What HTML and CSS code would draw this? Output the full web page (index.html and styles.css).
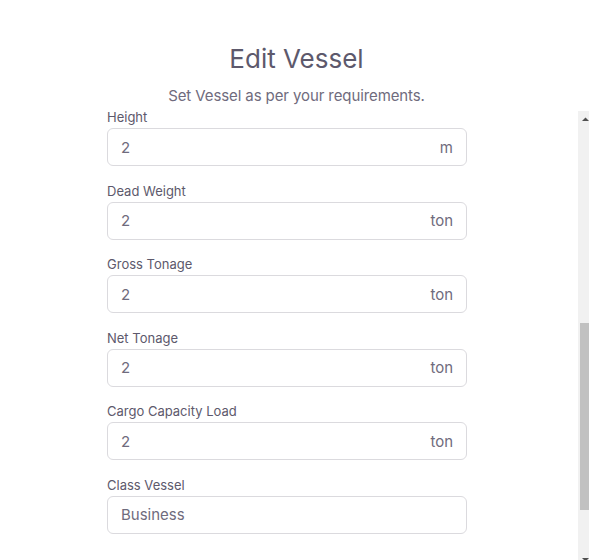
FILE: index.html
```html
<!DOCTYPE html>
<html lang="en">
<head>
<meta charset="utf-8">
<title>Edit Vessel</title>
<link rel="stylesheet" href="styles.css">
</head>
<body>
<div class="modal">
  <div class="modal-header">
    <h3 class="title">Edit Vessel</h3>
    <p class="subtitle">Set Vessel as per your requirements.</p>
  </div>
  <div class="modal-body">
    <form class="form">
      <div class="field"><label class="label">Height</label><div class="control"><span class="value">2</span><span class="unit">m</span></div></div>
      <div class="field"><label class="label">Dead Weight</label><div class="control"><span class="value">2</span><span class="unit">ton</span></div></div>
      <div class="field"><label class="label">Gross Tonage</label><div class="control"><span class="value">2</span><span class="unit">ton</span></div></div>
      <div class="field"><label class="label">Net Tonage</label><div class="control"><span class="value">2</span><span class="unit">ton</span></div></div>
      <div class="field"><label class="label">Cargo Capacity Load</label><div class="control"><span class="value">2</span><span class="unit">ton</span></div></div>
      <div class="field"><label class="label">Class Vessel</label><div class="control"><span class="value">Business</span></div></div>
    </form>
    <div class="scrollbar" aria-hidden="true">
      <div class="sb-arrow">
        <svg width="15" height="15" viewBox="0 0 15 15"><path d="M4 10 L11 10 L7.5 6.5 Z" fill="#505050"/></svg>
      </div>
      <div class="sb-track"><div class="sb-thumb"></div></div>
      <div class="sb-arrow">
        <svg width="15" height="15" viewBox="0 0 15 15"><path d="M4 5 L11 5 L7.5 8.5 Z" fill="#505050"/></svg>
      </div>
    </div>
  </div>
</div>
</body>
</html>
```
FILE: styles.css
```css
html, body {
  margin: 0;
  padding: 0;
  overflow: hidden;
  background: #ffffff;
}
body {
  width: 589px;
  height: 560px;
  font-family: Inter, "Noto Sans", "Liberation Sans", sans-serif;
  color: #6f6b7d;
}
.modal {
  width: 593px;
  max-width: 100vw;
  height: 560px;
  overflow: hidden;
}
.modal-header {
  width: 593px;
  padding-top: 42px;
  text-align: center;
}
.title {
  margin: 0;
  font-size: 26px;
  font-weight: 400;
  line-height: 34px;
  color: #5d596c;
}
.subtitle {
  margin: 10px 0 2px;
  font-size: 15px;
  line-height: 20px;
  letter-spacing: -0.1px;
  color: #6f6b7d;
}
.modal-body {
  display: flex;
  align-items: flex-start;
  width: 593px;
}
.form {
  width: 578px;
  box-sizing: border-box;
  padding: 0 0 10px 107px;
}
.field {
  width: 360px;
  margin-bottom: 15.6px;
}
.label {
  display: block;
  font-size: 13px;
  line-height: 18px;
  margin-bottom: 2px;
  color: #5d596c;
}
.control {
  box-sizing: border-box;
  height: 38px;
  border: 1px solid #dbdade;
  border-radius: 6px;
  display: flex;
  align-items: center;
  justify-content: space-between;
  padding: 0 13px 0 13px;
  font-size: 15px;
  color: #6f6b7d;
}
.unit {
  color: #6f6b7d;
}
.scrollbar {
  flex: none;
  width: 15px;
  height: 457px;
  margin-top: 3px;
  background: #f1f1f1;
  display: flex;
  flex-direction: column;
}
.sb-arrow {
  height: 15px;
  flex: none;
}
.sb-arrow svg {
  display: block;
}
.sb-track {
  flex: 1;
}
.sb-thumb {
  width: 11px;
  height: 187px;
  margin: 197px 0 0 2px;
  background: #c1c1c1;
}
```
